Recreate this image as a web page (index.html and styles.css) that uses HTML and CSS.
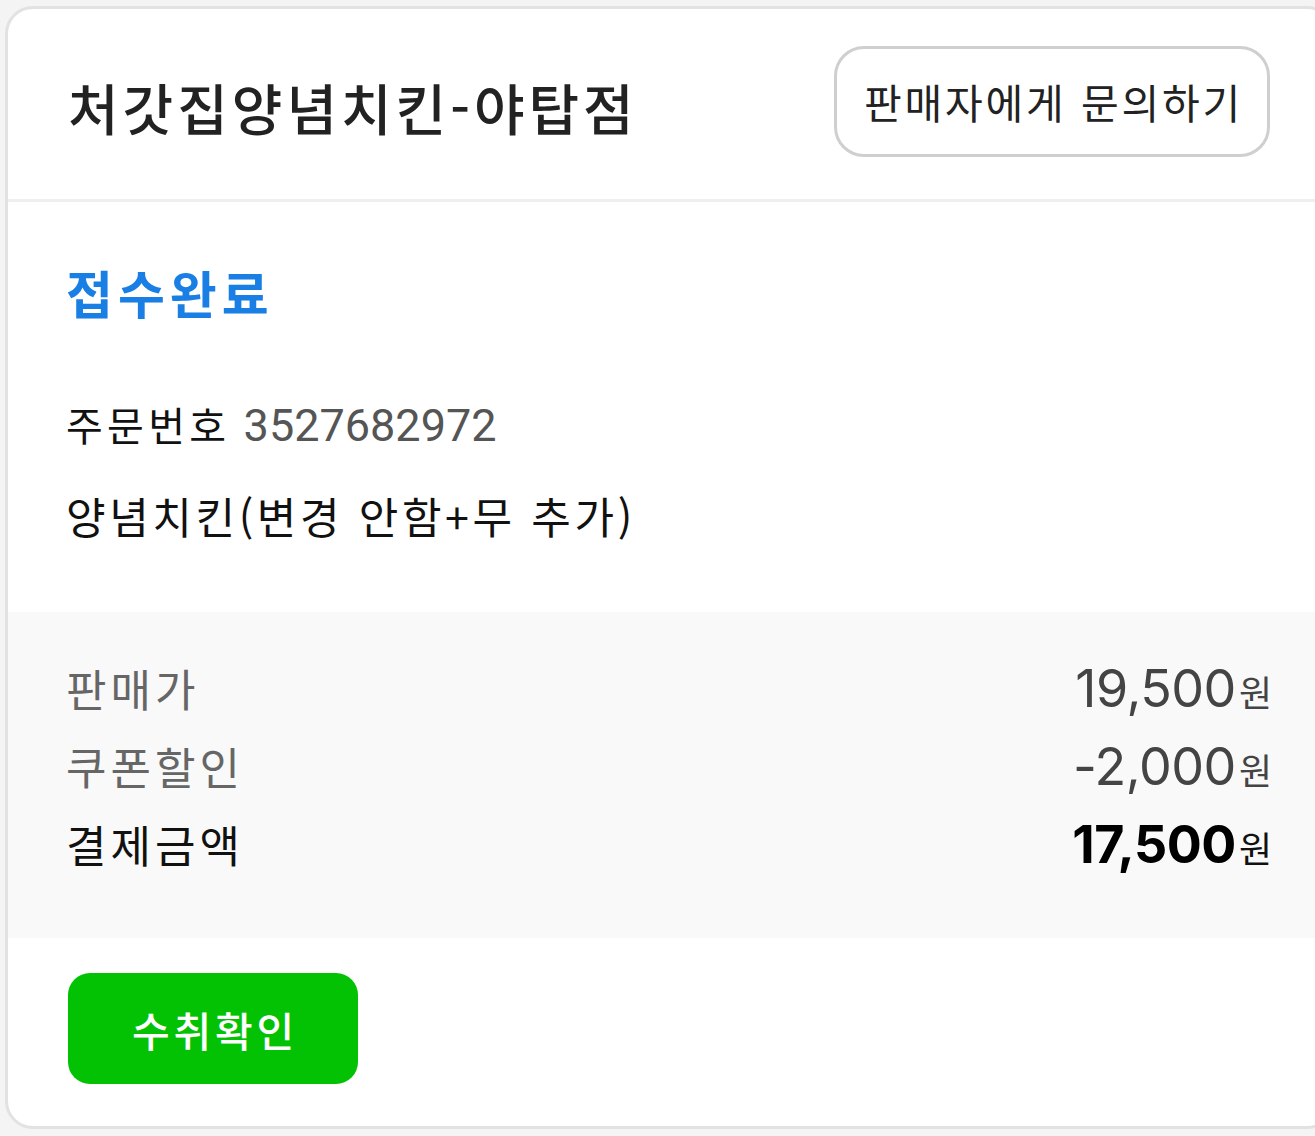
FILE: index.html
```html
<!DOCTYPE html>
<html lang="ko">
<head>
<meta charset="utf-8">
<title>주문 상세</title>
<link rel="stylesheet" href="styles.css">
</head>
<body>
<div class="card">
  <div class="header">
    <h1 class="store">처갓집양념치킨-야탑점</h1>
    <button class="ask">판매자에게 문의하기</button>
  </div>
  <div class="info">
    <div class="status">접수완료</div>
    <div class="order-no"><span class="key">주문번호</span> <span class="num">3527682972</span></div>
    <div class="item">양념치킨(변경 안함+무 추가)</div>
  </div>
  <div class="prices">
    <div class="row"><span class="label">판매가</span><span class="amount">19,500<span class="won">원</span></span></div>
    <div class="row"><span class="label">쿠폰할인</span><span class="amount">-2,000<span class="won">원</span></span></div>
    <div class="row total"><span class="label">결제금액</span><span class="amount">17,500<span class="won">원</span></span></div>
  </div>
  <div class="actions">
    <button class="confirm">수취확인</button>
  </div>
</div>
</body>
</html>
```

FILE: styles.css
```css
html, body {
  margin: 0;
  padding: 0;
  background: #f4f4f4;
  overflow: hidden;
}
body {
  font-family: "Noto Sans CJK KR", sans-serif;
  color: #111;
}
.card {
  margin: 6px -20px 0 5px;
  background: #fff;
  border: 3px solid #e2e2e2;
  border-radius: 28px;
  overflow: hidden;
}
.header {
  height: 190px;
  display: flex;
  align-items: center;
  justify-content: space-between;
  padding: 0 62px 0 60px;
  border-bottom: 3px solid #efefef;
}
.store {
  margin: 0;
  font-size: 55px;
  font-weight: 500;
  color: #222;
  line-height: 60px;
  padding-top: 3px;
  letter-spacing: 4px;
}
.ask {
  width: 436px;
  height: 111px;
  margin-bottom: 6px;
  box-sizing: border-box;
  border: 3px solid #cfcfcf;
  border-radius: 30px;
  background: #fff;
  font-family: "Noto Sans CJK KR", sans-serif;
  font-size: 41px;
  color: #222;
  padding: 0 0 0 3px;
  letter-spacing: 2.8px;
}
.info {
  padding: 60px 58px 71px;
}
.status {
  font-size: 51px;
  line-height: 60px;
  font-weight: 700;
  color: #1a7fe4;
  letter-spacing: 5px;
}
.order-no {
  margin-top: 77px;
  font-size: 40px;
  line-height: 50px;
  color: #111;
}
.key {
  letter-spacing: 4.3px;
}
.num {
  font-family: Roboto, sans-serif;
  font-size: 45px;
  color: #555;
  margin-left: 2px;
}
.item {
  margin-top: 38px;
  font-size: 43px;
  line-height: 52px;
  color: #111;
  letter-spacing: 3.6px;
}
.prices {
  background: #f9f9f9;
  padding: 37px 60px 55px 58px;
}
.row {
  height: 78px;
  display: flex;
  align-items: center;
  justify-content: space-between;
}
.label {
  font-size: 44px;
  color: #666;
  letter-spacing: 4px;
}
.amount {
  font-family: Inter, sans-serif;
  font-size: 52px;
  color: #444;
  letter-spacing: -0.5px;
}
.won {
  font-family: "Noto Sans CJK KR", sans-serif;
  font-size: 36px;
  letter-spacing: 0;
  margin-left: 3px;
}
.total .label {
  color: #111;
}
.total .amount {
  font-weight: 700;
  color: #000;
}
.total .won {
  font-weight: 400;
  color: #111;
}
.actions {
  padding: 35px 58px 42px 60px;
}
.confirm {
  width: 290px;
  height: 111px;
  border: none;
  border-radius: 22px;
  background: #03c203;
  color: #fff;
  font-family: "Noto Sans CJK KR", sans-serif;
  font-size: 41px;
  font-weight: 500;
  padding: 0 0 0 4px;
  letter-spacing: 3.8px;
  display: block;
}
```
